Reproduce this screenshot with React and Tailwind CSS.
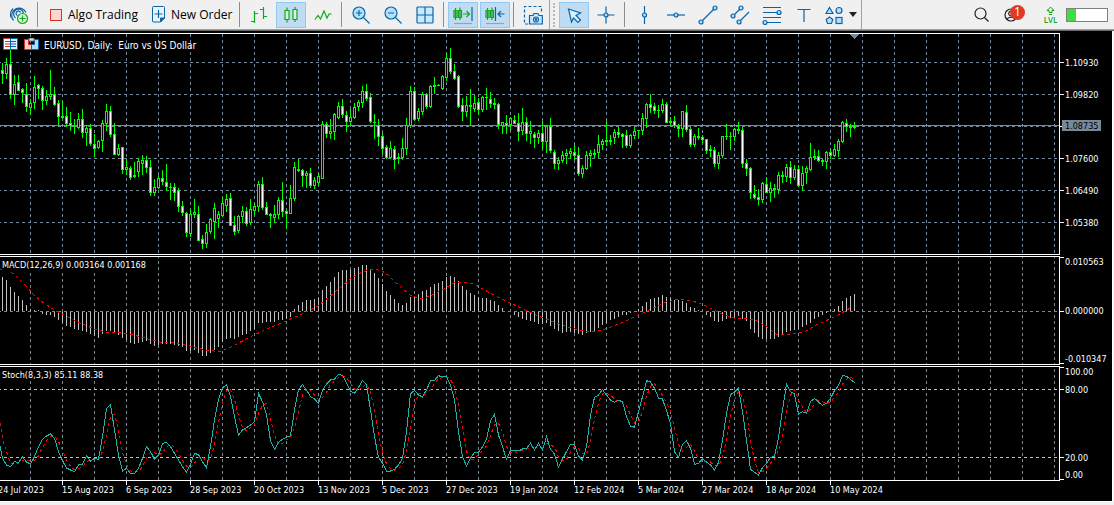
import clsx from "clsx";

// One entry per candle: high, body top, body bottom, low, kind (w = falling, h = rising)
const CANDLES = `
63 70 74 84 w|58 64 74 79 h|50 64 95 99 w|75 84 95 105 h|75 82 91 91 w|88 89 93 103 w|83 94 107 112 w|99 103 108 115 h
76 87 103 109 h|84 85 89 99 w|86 88 101 110 w|90 96 101 105 h|70 94 97 100 h|87 94 105 106 w|100 103 117 126 w|101 116 118 119 w
107 116 124 127 w|112 123 126 131 w|119 126 127 134 h|113 119 128 129 h|109 119 133 138 w|125 128 133 146 h|124 128 144 146 w
134 144 149 157 w|140 141 148 149 h|120 123 141 152 h|104 111 124 131 h|106 111 135 137 w|123 134 155 155 w|144 148 155 156 h
147 147 170 174 w|159 167 170 175 h|166 168 178 180 w|162 175 177 178 h|158 161 172 177 h|155 160 164 175 h|156 160 168 173 w
160 167 193 196 w|179 187 193 196 h|175 178 188 189 h|170 178 182 185 w|164 182 187 191 w|183 187 188 200 w|183 187 193 201 w
188 190 207 212 w|201 206 213 216 w|212 213 233 237 w|210 214 234 237 h|199 212 215 218 h|206 214 241 241 w|235 239 244 249 w
224 232 244 248 h|218 219 232 234 h|203 208 222 239 h|211 214 219 228 h|198 203 216 217 h|194 199 206 212 h|193 198 226 226 w
216 225 232 235 w|215 216 231 233 h|206 211 217 223 h|207 211 224 226 w|199 209 223 225 h|203 206 211 215 h|181 184 207 212 h
177 184 208 210 w|202 207 215 215 w|213 214 216 228 h|205 214 218 223 h|197 200 215 219 h|182 200 212 217 w|209 211 214 229 w
185 198 214 214 h|162 167 199 201 h|159 169 171 172 w|169 170 176 187 w|171 173 176 188 h|168 173 186 188 w|177 180 186 189 h
173 176 183 185 h|121 124 179 179 h|122 124 134 138 w|119 131 134 139 h|113 114 132 140 h|102 106 118 119 h|99 106 115 118 w
111 115 122 132 w|109 117 122 125 h|103 107 118 119 h|100 102 107 111 h|86 91 103 108 h|84 91 99 101 w|93 97 122 123 w
114 122 123 139 w|119 125 137 146 w|133 136 149 154 w|145 147 158 159 w|141 148 158 159 h|146 149 160 169 w|153 157 159 164 h
138 148 158 160 h|118 125 149 155 h|86 91 126 128 h|87 91 120 121 w|108 111 119 121 h|92 94 112 115 h|93 94 107 109 w
85 86 107 108 h|77 85 87 94 w|84 85 86 86 h|75 76 89 90 h|53 58 78 81 h|48 58 72 74 w|64 71 79 80 w|75 76 107 108 w
98 105 112 121 w|96 105 112 117 h|89 105 107 125 w|95 103 109 112 h|98 102 110 115 w|96 97 110 112 h|88 97 98 110 h
92 99 104 108 w|98 103 105 109 w|103 104 125 129 w|122 122 126 134 h|115 123 126 134 w|117 118 125 130 h|115 120 124 124 w
113 123 132 141 w|108 122 131 135 h|117 122 134 141 w|121 131 134 144 h|132 134 138 148 w|130 133 138 144 h|121 133 142 149 w
125 126 142 153 h|118 126 151 153 w|150 152 164 169 w|157 160 164 170 h|151 155 161 163 h|149 153 156 164 h|148 151 154 159 h
145 152 156 160 w|147 155 174 176 w|165 168 174 178 h|151 155 169 170 h|150 153 156 167 h|149 153 155 158 w|135 144 153 158 h
139 141 145 150 h|121 140 142 146 w|135 140 142 145 w|129 132 138 144 h|127 132 135 138 w|133 134 137 148 w|130 135 146 148 w
134 135 146 148 h|127 131 136 139 h|130 130 131 137 h|113 118 131 135 h|103 104 119 128 h|94 104 108 113 w|103 106 111 114 w
105 110 111 118 h|99 104 111 113 h|102 104 123 123 w|117 121 123 126 w|116 121 126 128 w|124 126 129 137 w|111 111 129 137 h
105 112 130 132 w|127 129 145 147 w|134 136 145 147 h|128 136 138 140 w|135 137 140 143 w|139 139 151 154 w|145 149 151 157 w
147 150 164 167 w|152 155 164 169 h|136 136 156 158 h|124 136 137 140 h|132 136 137 150 h|128 129 137 141 h|122 129 131 134 w
127 130 164 168 w|159 163 169 176 w|167 168 193 199 w|185 194 198 199 w|189 197 200 205 w|182 183 200 203 h|177 184 193 193 w
182 188 193 202 h|184 188 190 198 w|172 175 190 194 h|171 175 177 183 w|164 167 177 182 h|161 167 178 184 w|165 169 178 180 h
165 169 186 187 w|166 173 186 191 h|166 168 173 184 h|143 157 170 171 h|149 156 158 160 w|150 156 161 162 w|159 160 162 166 w
151 152 162 169 h|149 152 156 159 w|144 149 156 157 h|139 141 151 157 h|121 122 142 143 h|119 123 127 132 w|124 126 128 137 w
122 126 128 129 h`
  .trim()
  .split(/[|\n]/)
  .map((row) => row.split(" "))
  .map(([high, top, bottom, low, kind]) => ({
    high: +high,
    top: +top,
    bottom: +bottom,
    low: +low,
    falling: kind === "w",
  }));

// Histogram bar lengths, positive is up
const MACD = [
  34, 31, 24, 19, 15, 11, 6, 2, 1, 1, -2, -3, -3, -5, -8, -11, -14, -15, -17,
  -18, -19, -20, -22, -24, -26, -22, -19, -19, -21, -23, -26, -28, -31, -32,
  -31, -30, -29, -32, -34, -33, -32, -32, -32, -33, -34, -35, -39, -39, -38,
  -41, -44, -44, -41, -38, -35, -30, -27, -26, -27, -25, -23, -22, -19, -17,
  -11, -11, -10, -10, -10, -8, -8, -7, -5, 2, 6, 9, 11, 11, 12, 13, 21, 25, 29,
  34, 39, 41, 41, 41, 43, 44, 46, 46, 42, 38, 33, 27, 20, 16, 12, 8, 6, 8, 14,
  15, 17, 20, 21, 24, 27, 28, 30, 34, 35, 34, 30, 25, 21, 18, 16, 14, 13, 13,
  11, 10, 6, 3, 0, 0, -3, -5, -7, -8, -9, -10, -12, -12, -11, -14, -17, -19,
  -21, -20, -20, -21, -22, -23, -21, -20, -19, -16, -13, -11, -8, -7, -5, -3,
  -3, -1, 0, 2, 5, 9, 12, 13, 14, 16, 14, 13, 11, 11, 10, 8, 4, 3, 1, 0, -3,
  -5, -9, -10, -9, -7, -6, -5, -4, -7, -9, -17, -21, -25, -27, -27, -27, -27,
  -25, -23, -20, -19, -18, -17, -15, -13, -11, -7, -5, -3, -1, 1, 2, 5, 10, 13,
  15, 17,
];

const MACD_SIGNAL =
  "0,269 10,271 18,278 28,288 34,295 41,301 53,309 62,314 78,322 94,329 106,332 118,332 134,335 148,339 160,342 174,343 190,346 206,350 214,351 222,351 233,346 250,337 267,329 286,321 302,314 318,306 334,293 350,279 362,272 374,269 382,271 388,275 394,281 402,288 410,295 420,299 430,296 442,290 454,283 463,282 474,284 490,293 506,301 527,311 543,318 562,325 578,330 592,332 602,330 614,326 630,319 647,311 666,302 680,299 693,301 706,306 722,314 734,318 746,318 757,321 767,327 776,334 782,335 793,334 806,331 818,324 830,319 842,313 850,308";

// %K depth below the pane's top, in thirds of a pixel
const STOCH = [
  625, 645, 650, 635, 638, 620, 636, 642, 620, 590, 568, 558, 552, 565, 605,
  632, 654, 660, 665, 645, 642, 617, 634, 625, 628, 560, 475, 463, 540, 615,
  663, 655, 670, 670, 655, 625, 590, 605, 628, 615, 580, 577, 590, 610, 630,
  650, 667, 642, 610, 614, 635, 653, 590, 510, 450, 413, 404, 440, 500, 555,
  540, 533, 525, 515, 430, 455, 495, 572, 598, 577, 568, 562, 557, 480, 420,
  404, 420, 440, 447, 460, 420, 402, 390, 387, 373, 376, 400, 424, 430, 412,
  391, 403, 480, 560, 622, 640, 663, 663, 658, 645, 625, 545, 432, 421, 435,
  441, 420, 392, 391, 377, 381, 380, 405, 450, 545, 620, 648, 625, 607, 607,
  590, 568, 512, 493, 555, 590, 628, 601, 602, 603, 597, 596, 579, 600, 580,
  600, 560, 598, 612, 652, 628, 605, 583, 585, 618, 630, 590, 495, 442, 435,
  419, 435, 450, 457, 451, 455, 500, 528, 532, 485, 440, 392, 396, 415, 444,
  447, 482, 520, 605, 622, 583, 572, 595, 643, 640, 627, 636, 645, 660, 638,
  570, 490, 434, 426, 413, 485, 570, 658, 667, 675, 653, 640, 622, 620, 563,
  480, 402, 425, 432, 492, 485, 490, 455, 445, 456, 466, 460, 445, 422, 407,
  377, 379, 388, 398,
];

const DATES = [
  "24 Jul 2023",
  "15 Aug 2023",
  "6 Sep 2023",
  "28 Sep 2023",
  "20 Oct 2023",
  "13 Nov 2023",
  "5 Dec 2023",
  "27 Dec 2023",
  "19 Jan 2024",
  "12 Feb 2024",
  "5 Mar 2024",
  "27 Mar 2024",
  "18 Apr 2024",
  "10 May 2024",
];

const barX = (i) => 2 + i * 4;
const stochY = (v) => 250 + v / 3;

const stochLine = ["0,446", ...STOCH.map((v, i) => `${barX(i) + 0.5},${stochY(v)}`)].join(" ");
const stochSignal = [
  "0,423",
  "3,441",
  ...STOCH.slice(2).map((v, i) => {
    const avg = (v + STOCH[i] + STOCH[i + 1]) / 3;
    return `${barX(i + 2) + 0.5},${stochY(avg)}`;
  }),
].join(" ");

const GRID = "#778899";
const CHART_FONT = "font-['DejaVu_Sans_Condensed','DejaVu_Sans',sans-serif]";

function GridColumns({ top, height, offset }) {
  return Array.from({ length: 80 }, (_, i) => (
    <line
      key={i}
      x1={30.5 + i * 32}
      x2={30.5 + i * 32}
      y1={top}
      y2={top + height}
      stroke={GRID}
      strokeDasharray="3 3"
      strokeDashoffset={offset}
    />
  ));
}

function DashRow({ y, color = GRID }) {
  return (
    <line x1="0" x2="100%" y1={y + 0.5} y2={y + 0.5} stroke={color} strokeDasharray="3 3" strokeDashoffset="2" />
  );
}

function Pane({ title, price, top, heightClass, ticks, axis, children }) {
  return (
    <section className={clsx("flex", heightClass)}>
      <div className="relative min-w-0 flex-1 border-y border-r border-white">
        <svg className="block h-full w-full" shapeRendering="crispEdges">
          <g transform={`translate(0 ${-top})`}>{children}</g>
        </svg>
        {title}
      </div>
      <svg className={clsx("block h-full w-[52px] shrink-0 overflow-visible text-[9px]", CHART_FONT)}>
        <g transform={`translate(0 ${1 - top})`}>
          {ticks.map((y) => (
            <rect key={y} x="0" y={y} width="4" height="1" fill="#fff" />
          ))}
          {axis.map(([label, y]) => (
            <text key={label} x="5" y={y} fill="#fff">
              {label}
            </text>
          ))}
          {price && (
            <>
              <rect x="2" y="120" width="39" height="11" fill={GRID} />
              <text x="5" y="129" fill="#000">
                {price}
              </text>
            </>
          )}
        </g>
      </svg>
    </section>
  );
}

function PriceTitle() {
  return (
    <div className="absolute top-[4px] left-[3px] flex h-3 items-center">
      <svg width="15" height="12" viewBox="0 0 15 12">
        <rect x=".5" y=".5" width="7" height="11" fill="#fff" stroke="#d9302c" />
        <rect x="7.5" y=".5" width="7" height="11" fill="#d8efff" stroke="#0a64a8" />
        <path d="M2 3.500h5M2 6h5M2 8.500h5" stroke="#d9302c" />
        <path d="M8 3.500h5M8 6h5M8 8.500h5" stroke="#0a64a8" />
      </svg>
      <svg className="ml-[6px]" width="15" height="12" viewBox="0 0 15 12">
        <path d="M.5 1.500h4v5h3v5h-7z" fill="#ffd0c8" stroke="#d9302c" />
        <path d="M14.500 1.500h-4v5h-3v5h7z" fill="#a9dcff" stroke="#0a64a8" />
        <rect x="5" y="0" width="5" height="3" fill="#ddd" stroke="#777" />
      </svg>
      <h1 className={clsx("ml-[5px] pt-0.5 text-[10px] whitespace-pre text-white", CHART_FONT)}>
        {"EURUSD, Daily:  Euro vs US Dollar"}
      </h1>
    </div>
  );
}

function IndicatorTitle({ children }) {
  return (
    <h2 className={clsx("absolute top-[3px] left-[2px] bg-black text-[9px] leading-[11px] text-white", CHART_FONT)}>
      {children}
    </h2>
  );
}

function PricePane() {
  return (
    <Pane
      title={<PriceTitle />}
      price="1.08735"
      top={34}
      heightClass="h-[222px]"
      ticks={[62, 94, 126, 158, 190, 222]}
      axis={[
        ["1.10930", 66],
        ["1.09820", 98],
        ["1.07600", 162],
        ["1.06490", 194],
        ["1.05380", 226],
      ]}
    >
      <GridColumns top={34} height={220} offset={0} />
      {[62, 94, 126, 158, 190, 222].map((y) => (
        <DashRow key={y} y={y} />
      ))}
      <rect x="0" y="125" width="100%" height="1" fill={GRID} />
      {CANDLES.map((c, i) => {
        const x = barX(i);
        const h = Math.max(1, c.bottom - c.top);
        return (
          <g key={i}>
            <rect x={x} y={c.high} width="1" height={Math.max(1, c.low - c.high)} fill="#0f0" />
            <rect x={x - 1} y={c.top} width="3" height={h} fill="#0f0" />
            {h > 2 && (
              <rect x={x} y={c.top + 1} width="1" height={h - 2} fill={c.falling ? "#fff" : "#000"} />
            )}
          </g>
        );
      })}
      <path d="M849 34h11l-5.500 5z" fill={GRID} />
    </Pane>
  );
}

function MacdPane() {
  return (
    <Pane
      title={<IndicatorTitle>MACD(12,26,9) 0.003164 0.001168</IndicatorTitle>}
      top={257}
      heightClass="h-[109px]"
      ticks={[257, 311, 363]}
      axis={[
        ["0.010563", 265],
        ["0.000000", 314],
        ["-0.010347", 362],
      ]}
    >
      <GridColumns top={257} height={107} offset={2} />
      <DashRow y={311} />
      {MACD.map((v, i) => (
        <rect
          key={i}
          x={barX(i)}
          y={v > 0 ? 311 - v : 312}
          width="1"
          height={v > 0 ? v : Math.max(0, -v)}
          fill="#c0c0c0"
        />
      ))}
      <polyline points={MACD_SIGNAL} fill="none" stroke="#f00" strokeDasharray="3 3" />
    </Pane>
  );
}

function StochPane() {
  return (
    <Pane
      title={<IndicatorTitle>Stoch(8,3,3) 85.11 88.38</IndicatorTitle>}
      top={367}
      heightClass="h-[115px]"
      ticks={[367, 389, 457, 479]}
      axis={[
        ["100.00", 375],
        ["80.00", 393],
        ["20.00", 461],
        ["0.00", 478],
      ]}
    >
      <GridColumns top={367} height={113} offset={4} />
      <DashRow y={389} color="#c0c0c0" />
      <DashRow y={457} color="#c0c0c0" />
      <polyline points={stochSignal} fill="none" stroke="#f00" strokeDasharray="3 3" />
      <polyline points={stochLine} fill="none" stroke="#20b2aa" />
    </Pane>
  );
}

function TimeAxis() {
  return (
    <svg className={clsx("block h-[20px] w-full text-[9px]", CHART_FONT)}>
      {DATES.map((date, i) => (
        <g key={date} transform={`translate(${i * 64 - 2} 0)`}>
          <rect x="0" y="0" width="1" height="4" fill="#fff" />
          <text x="0" y="12" fill="#fff">
            {date}
          </text>
        </g>
      ))}
    </svg>
  );
}

function Icon({ width = 20, children }) {
  return (
    <svg width={width} height="20" viewBox={`0 0 ${width} 20`} fill="none" stroke="#0a64a8" strokeWidth="1.2">
      {children}
    </svg>
  );
}

function Knob({ x, y }) {
  return <circle cx={x} cy={y} r="2" fill="#b5e0fb" />;
}

function ToolButton({ label, active, children }) {
  return (
    <button
      type="button"
      aria-label={label}
      aria-pressed={active}
      className={clsx(
        "flex h-[26px] w-[30px] shrink-0 items-center justify-center border",
        active ? "border-[#90c8f6] bg-[#c0dcf3]" : "border-transparent"
      )}
    >
      {children}
    </button>
  );
}

function Divider() {
  return <div className="mr-1 ml-[3px] h-[25px] w-px shrink-0 bg-[#8d8d8d]" />;
}

function Group({ children }) {
  return <div className="flex shrink-0 gap-0.5">{children}</div>;
}

function Toolbar() {
  return (
    <header className="border-b border-[#696969] bg-[#f0f0f0]">
      <div className="flex h-[30px] items-center overflow-hidden border-b border-[#a0a0a0] pl-1 font-['Open_Sans','Noto_Sans',sans-serif] text-xs text-black">
        <ToolButton label="Community">
          <Icon>
            <path d="M4.500 15.500a7.500 7.500 0 1 1 12.500-8M6.500 13a5 5 0 1 1 8-5M8.500 10.500a2.300 2.300 0 1 1 3-3" />
            <path d="M2 12.500a9 9 0 0 1 2-9" />
            <circle cx="13.500" cy="13.500" r="5" fill="#d8f7d8" stroke="#12a81e" />
            <path d="M13.500 10.500v6M10.500 13.500h6" stroke="#12a81e" />
          </Icon>
        </ToolButton>
        <Divider />
        <button type="button" className="flex w-[100px] shrink-0 items-center gap-[6px] pl-2 whitespace-nowrap">
          <span className="size-3 shrink-0 border border-[#d9302c] bg-[#ffd6cf]" />
          Algo Trading
        </button>
        <button type="button" className="ml-0.5 flex w-[92px] shrink-0 items-center gap-[6px] pl-2 whitespace-nowrap">
          <svg className="shrink-0" width="13" height="17" viewBox="0 0 13 17" fill="none" stroke="#0a64a8">
            <path d="M.5 1.500a1 1 0 0 1 1-1h10a1 1 0 0 1 1 1v10.500l-4 4h-7a1 1 0 0 1-1-1z" fill="#e9f6ff" />
            <path d="M12.500 12h-4v4z" fill="#0a64a8" />
            <path d="M6.500 4v8M2.500 8h8" strokeWidth="1.200" />
          </svg>
          New Order
        </button>
        <Divider />

        <Group>
          <ToolButton label="Bar chart">
            <Icon>
              <path d="M5.500 6v12M2 16.500h3.500M5.500 8.500H9M14.500 2v12M11 4.500h3.500M14.500 11.500H18" stroke="#12a81e" />
            </Icon>
          </ToolButton>
          <ToolButton label="Candlesticks" active>
            <Icon>
              <path d="M6 2.500v15M14 2v15" stroke="#12a81e" />
              <path d="M4 5.500h4v9H4zM12 4.500h4v10h-4z" fill="#d5f5e0" stroke="#12a81e" />
            </Icon>
          </ToolButton>
          <ToolButton label="Line chart">
            <Icon>
              <path d="M2 14.500l3-4 2.500 3.500 3.500-8 3 7 2-4 2.500 0" stroke="#12a81e" />
            </Icon>
          </ToolButton>
        </Group>
        <Divider />

        <Group>
          <ToolButton label="Zoom in">
            <Icon>
              <circle cx="8" cy="8" r="6" fill="#b5e0fb" />
              <path d="M12.500 12.500l6 6M5 8h6M8 5v6" />
            </Icon>
          </ToolButton>
          <ToolButton label="Zoom out">
            <Icon>
              <circle cx="8" cy="8" r="6" fill="#b5e0fb" />
              <path d="M12.500 12.500l6 6M5 8h6" />
            </Icon>
          </ToolButton>
          <ToolButton label="Tile windows">
            <Icon>
              <rect x="2" y="2" width="16" height="16" rx="1" fill="#c9e9fc" />
              <path d="M10 2v16M2 10h16" />
            </Icon>
          </ToolButton>
        </Group>
        <Divider />

        <Group>
          <ToolButton label="Auto scroll" active>
            <Icon>
              <path d="M2.500 3v12M7 2.500v12.500M1 5.500h3v7H1zM5.500 5.500h3v7h-3zM10 9h6.500M13.500 6l3 3-3 3" stroke="#12a81e" />
              <path d="M19 2v14" />
              <path d="M1 18.500h18" stroke="#a0a0a0" />
            </Icon>
          </ToolButton>
          <ToolButton label="Chart shift" active>
            <Icon>
              <path d="M2.500 3v12M7 2.500v12.500M1 5.500h3v7H1zM5.500 5.500h3v7h-3z" stroke="#12a81e" />
              <path d="M10.500 2v14M19.500 9h-6.500M16 6l-3 3 3 3" />
              <path d="M1 18.500h18" stroke="#a0a0a0" />
            </Icon>
          </ToolButton>
        </Group>
        <Divider />

        <ToolButton label="Screenshot">
          <Icon>
            <path d="M5 19H1.500V1.500h17V8" strokeDasharray="3 2" />
            <path d="M6.500 10.500h3.500l1-2h4l1 2h3.300v8.500H6.500z" fill="#c9e9fc" />
            <circle cx="13" cy="14.500" r="2.500" fill="#fff" />
            <circle cx="13" cy="14.500" r=".8" fill="#0a64a8" />
          </Icon>
        </ToolButton>
        <div className="ml-px h-full w-px shrink-0 bg-[#a0a0a0]" />
        <div className="mr-1 ml-[3px] h-[24px] shrink-0 border-l-2 border-dotted border-[#b8b8b8]" />

        <Group>
          <ToolButton label="Cursor" active>
            <Icon>
              <path d="M4.500 4l12 4-4.500 2.500 4.500 4.500-2.500 2.500-4.500-4.500-2 4z" fill="#d8efff" />
            </Icon>
          </ToolButton>
          <ToolButton label="Crosshair">
            <Icon>
              <path d="M10 1.500v17M1.500 10h17" />
              <Knob x={10} y={10} />
            </Icon>
          </ToolButton>
        </Group>
        <Divider />

        <Group>
          <ToolButton label="Vertical line">
            <Icon>
              <path d="M10.500 1v18" />
              <Knob x={10.5} y={10} />
            </Icon>
          </ToolButton>
          <ToolButton label="Horizontal line">
            <Icon>
              <path d="M1 10h18" />
              <Knob x={10} y={10} />
            </Icon>
          </ToolButton>
          <ToolButton label="Trendline">
            <Icon>
              <path d="M3 17L17 3" />
              <Knob x={3} y={17} />
              <Knob x={17} y={3} />
            </Icon>
          </ToolButton>
          <ToolButton label="Equidistant channel">
            <Icon>
              <path d="M3 11l8-8M9 17L19 7" />
              <Knob x={3} y={11} />
              <Knob x={11} y={3} />
              <Knob x={9} y={17} />
            </Icon>
          </ToolButton>
          <ToolButton label="Fibonacci retracement">
            <Icon>
              <path d="M1 2.500h18M1 7.500h18M1 12.500h18M1 17.500h18" />
              <Knob x={17} y={7.5} />
              <Knob x={3} y={17.5} />
            </Icon>
          </ToolButton>
          <ToolButton label="Text">
            <Icon>
              <path d="M3.500 4.500h13M10 4.500V17" />
            </Icon>
          </ToolButton>
          <button type="button" aria-label="Objects" className="flex w-[40px] shrink-0 items-center gap-[6px] pl-1">
            <Icon width={18}>
              <path d="M4.500 2.500l3.500 6H1z" fill="#b5e0fb" />
              <circle cx="14" cy="5.500" r="3" fill="#b5e0fb" />
              <path d="M4.500 12l3.300 2.500-1.300 4h-4l-1.300-4z" fill="#b5e0fb" />
              <rect x="11" y="12.500" width="6" height="6" fill="#b5e0fb" />
            </Icon>
            <svg width="8" height="5" viewBox="0 0 8 5">
              <path d="M0 0h8L4 5z" fill="#222" />
            </svg>
          </button>
        </Group>
        <div className="h-full w-px shrink-0 bg-[#a0a0a0]" />

        <div className="ml-auto flex shrink-0 items-center pr-[6px]">
          <button type="button" aria-label="Search" className="mr-[15px]">
            <svg width="15" height="15" viewBox="0 0 15 15" fill="none" stroke="#222" strokeWidth="1.200">
              <circle cx="6.500" cy="6.500" r="5.500" />
              <path d="M10.500 10.500l4 4" />
            </svg>
          </button>
          <button type="button" aria-label="Notifications" className="relative mr-[18px] w-[22px]">
            <svg width="14" height="14" viewBox="0 0 14 14" fill="none" stroke="#222" strokeWidth="1.200">
              <circle cx="7" cy="7" r="6" />
              <circle cx="7" cy="5.500" r="2.300" />
              <path d="M3 11.500c1-3 7-3 8 0" />
            </svg>
            <span className="absolute -top-[3px] left-[6px] flex size-[15px] items-center justify-center rounded-full bg-[#e03a22] text-xs leading-none text-white">
              1
            </span>
          </button>
          <button type="button" aria-label="Level" className="mr-[9px] flex w-[13px] flex-col items-center text-[#12a81e]">
            <svg width="9" height="10" viewBox="0 0 9 10" fill="#d8f7d8" stroke="currentColor">
              <path d="M4.500 1l3.500 3.500H6V6.500H3V4.500H1zM3 8.500h3" />
            </svg>
            <span className="text-[8px] leading-[8px] font-semibold">LVL</span>
          </button>
          <div className="h-[14px] w-[42px] border border-[#808080] bg-white">
            <div className="h-full w-[9px] bg-[#40dc40]" />
          </div>
        </div>
      </div>
    </header>
  );
}

export default function App() {
  return (
    <div className="min-h-screen bg-[#f0f0f0]">
      <Toolbar />
      <main className="pr-px">
        <div className="flex flex-col gap-px border-r border-b border-white bg-black pt-0.5">
          <PricePane />
          <MacdPane />
          <div>
            <StochPane />
            <TimeAxis />
          </div>
        </div>
      </main>
    </div>
  );
}
